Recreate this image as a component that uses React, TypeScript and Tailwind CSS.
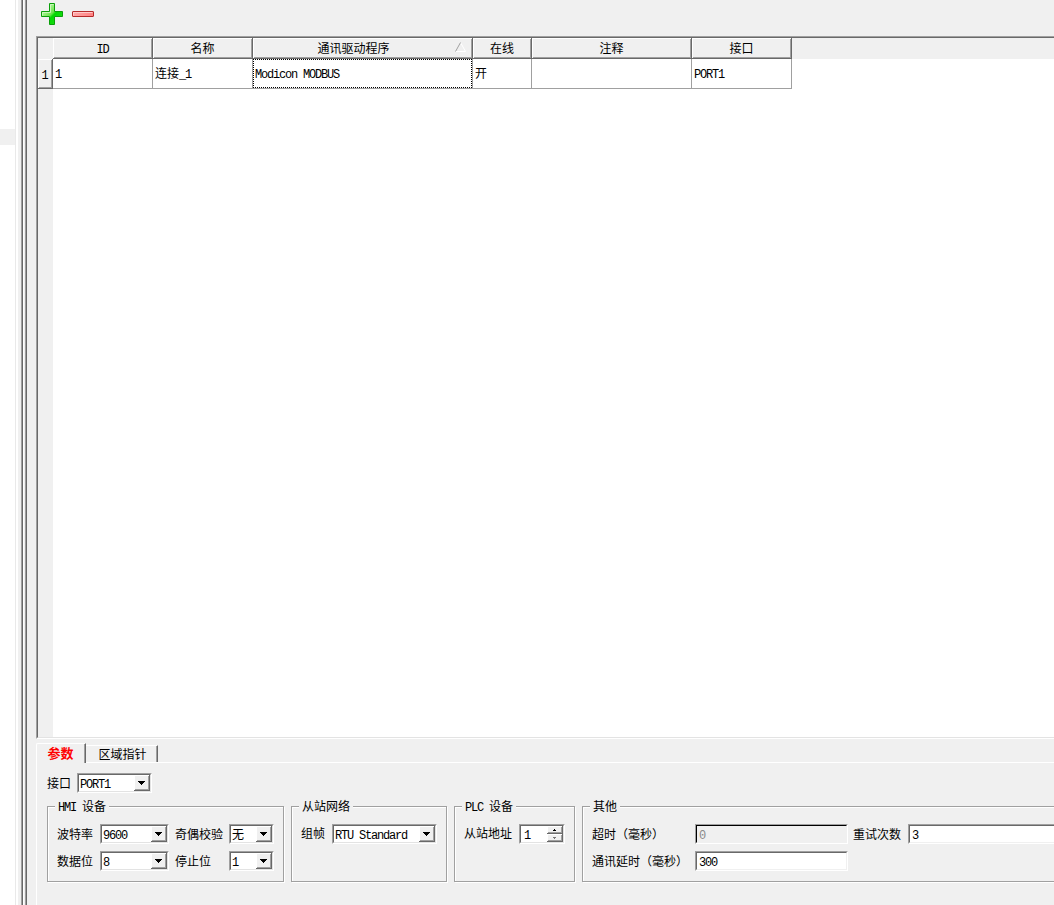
import { Fragment } from "react";
import type { ReactNode } from "react";

const sunken =
  "border border-t-[#a0a0a0] border-l-[#a0a0a0] border-r-white border-b-white";
const sunkenInner =
  "border border-t-[#696969] border-l-[#696969] border-r-[#e3e3e3] border-b-[#e3e3e3]";
const raised =
  "border-r border-b border-[#696969] shadow-[inset_1px_1px_0_#fff,inset_-1px_-1px_0_#a0a0a0]";

// latin runs take half the width of a chinese glyph
const Text = ({ children }: { children: string }) => (
  <span>
    {children.split(/([\x20-\x7e]+)/).map((part, i) =>
      i % 2 ? (
        <span
          key={i}
          className="font-['Liberation_Mono',monospace] text-[12px] leading-3 tracking-[-1.2px] whitespace-pre"
        >
          {part}
        </span>
      ) : (
        <Fragment key={i}>{part}</Fragment>
      )
    )}
  </span>
);

const columns = [
  { title: "ID", value: "1", width: "w-[100px]" },
  { title: "名称", value: "连接_1", width: "w-[100px]" },
  { title: "通讯驱动程序", value: "Modicon MODBUS", width: "w-[220px]" },
  { title: "在线", value: "开", width: "w-[59px]" },
  { title: "注释", value: "", width: "w-[160px]" },
  { title: "接口", value: "PORT1", width: "w-[100px]" },
];

const SortMark = () => (
  <svg className="absolute top-1 right-1.5 h-[11px] w-[11px]" viewBox="0 0 11 11" fill="none">
    <path d="M5.5 0.5 10.5 9.5H0.5" stroke="#fff" />
    <path d="M0.5 9.5 5.5 0.5" stroke="#a0a0a0" />
  </svg>
);

const Toolbar = () => (
  <div className="flex h-9 gap-[9px] pt-[3px] pl-[15px]">
    <svg className="h-[22px] w-[22px]" viewBox="0 0 22 22">
      <defs>
        <linearGradient id="green" x1="0" y1="0" x2="1" y2="1">
          <stop offset="0.2" stopColor="#b5f5a0" />
          <stop offset="0.48" stopColor="#6be64c" />
          <stop offset="0.56" stopColor="#00d800" />
          <stop offset="1" stopColor="#2be020" />
        </linearGradient>
      </defs>
      <path
        d="M8.5 .5h5v8h8v5h-8v8h-5v-8h-8v-5h8z"
        fill="url(#green)"
        stroke="#0a9e0a"
        strokeLinejoin="round"
      />
      <path d="M9.5 9.5v-8h3M1.5 12.5v-3h8" fill="none" stroke="#c9f8ba" />
    </svg>
    <svg className="h-[22px] w-[22px]" viewBox="0 0 22 22">
      <defs>
        <linearGradient id="red" x1="0" y1="0" x2="1" y2="0">
          <stop offset="0" stopColor="#ffa8a8" />
          <stop offset="1" stopColor="#ff8080" />
        </linearGradient>
      </defs>
      <rect x=".5" y="8.5" width="21" height="5" rx=".5" fill="url(#red)" stroke="#b52a2a" />
      <path d="M1.5 12.5v-3h19" fill="none" stroke="#ffcaca" />
    </svg>
  </div>
);

const ConnectionTable = () => (
  <div className={`mr-[-2px] ml-2.5 h-[703px] shrink-0 ${sunken}`}>
    <div className={`flex h-full flex-col bg-white ${sunkenInner}`}>
      <div className="flex h-[21px] shrink-0 bg-[#f0f0f0] pl-[15px]">
        {columns.map((col) => (
          <div
            key={col.title}
            className={`relative flex items-center justify-center ${col.width} ${raised}`}
          >
            {col.title === "通讯驱动程序" ? (
              <>
                <span className="pr-[18px]">
                  <Text>{col.title}</Text>
                </span>
                <SortMark />
              </>
            ) : (
              <Text>{col.title}</Text>
            )}
          </div>
        ))}
      </div>
      <div className="flex min-h-0 flex-1">
        <div className="w-[15px] bg-[#f0f0f0]">
          <div className={`flex h-[30px] items-center justify-center pr-px ${raised}`}>
            <Text>1</Text>
          </div>
        </div>
        {columns.map((col) => (
          <div
            key={col.title}
            className={`flex h-[30px] items-center border-r border-b border-[#a0a0a0] ${col.width}`}
          >
            <div
              className={`flex h-full w-full items-center pb-px ${
                col.title === "通讯驱动程序"
                  ? "border border-dotted border-black pl-px"
                  : "pl-0.5"
              }`}
            >
              <Text>{col.value}</Text>
            </div>
          </div>
        ))}
      </div>
    </div>
  </div>
);

const Select = ({ value, width }: { value: string; width: string }) => (
  <div className={`h-5 shrink-0 ${width} ${sunken}`}>
    <div className={`flex h-full items-center bg-white pl-px ${sunkenInner}`}>
      <span className="flex-1 pb-px whitespace-nowrap">
        <Text>{value}</Text>
      </span>
      <span
        className={`flex h-full w-4 shrink-0 items-center justify-center bg-[#f0f0f0] ${raised}`}
      >
        <svg className="h-1 w-[7px]" viewBox="0 0 7 4" shapeRendering="crispEdges">
          <path d="M0 0h7v1H6v1H5v1H4v1H3V3H2V2H1V1H0z" />
        </svg>
      </span>
    </div>
  </div>
);

const Input = ({
  value,
  width,
  disabled,
}: {
  value: string;
  width: string;
  disabled?: boolean;
}) => (
  <div className={`h-5 shrink-0 ${width} ${sunken}`}>
    <div
      className={`flex h-full items-center border border-r-[#f0f0f0] border-b-[#f0f0f0] pl-0.5 ${
        disabled
          ? "border-t-black border-l-black bg-[#f0f0f0] text-[#8a8a8a]"
          : "border-t-[#696969] border-l-[#696969] bg-white"
      }`}
    >
      <Text>{value}</Text>
    </div>
  </div>
);

const SpinBox = () => (
  <div className={`h-5 w-[46px] shrink-0 ${sunken}`}>
    <div className={`flex h-full items-center bg-white pl-[3px] ${sunkenInner}`}>
      <span className="flex-1">
        <Text>1</Text>
      </span>
      <span className="flex h-full w-4 flex-col bg-[#f0f0f0]">
        <span className={`flex h-2 items-center justify-center ${raised}`}>
          <svg className="h-0.5 w-[3px]" viewBox="0 0 3 2" shapeRendering="crispEdges">
            <path d="M1 0h1v1h1v1H0V1h1z" />
          </svg>
        </span>
        <span className={`flex h-2 items-center justify-center ${raised}`}>
          <svg className="h-0.5 w-[3px]" viewBox="0 0 3 2" shapeRendering="crispEdges">
            <path d="M0 0h3v1H2v1H1V1H0z" fill="#777" />
          </svg>
        </span>
      </span>
    </div>
  </div>
);

const Group = ({
  title,
  width,
  children,
}: {
  title: string;
  width: string;
  children: ReactNode;
}) => (
  <div
    className={`h-[76px] shrink-0 border border-[#a0a0a0] shadow-[1px_1px_0_#fff,inset_1px_1px_0_#fff] ${width}`}
  >
    <div className="-mt-2 ml-[7px] flex h-4 w-fit items-center bg-[#f0f0f0] pr-[3px] pb-0.5 pl-[3px] whitespace-nowrap">
      <Text>{title}</Text>
    </div>
    <div className="flex flex-col gap-[7px] pt-[9px] pl-[9px]">{children}</div>
  </div>
);

const Row = ({ children }: { children: ReactNode }) => (
  <div className="flex h-5 items-center whitespace-nowrap">{children}</div>
);

const Tabs = () => (
  <div className="ml-2.5 flex h-5 shrink-0 items-end">
    <div className="flex h-5 w-[50px] items-center justify-center rounded-tl-[2px] border-t border-l border-white border-r border-r-[#696969] pr-px pb-px text-[13px] font-bold text-[#ff0000] shadow-[inset_-1px_0_0_#a0a0a0]">
      参数
    </div>
    <div className="flex h-full flex-1 border-b border-white pt-0.5">
      <div className="flex h-[17px] w-[72px] items-center justify-center border-t border-r border-t-white border-r-[#696969] pl-0.5 shadow-[inset_-1px_0_0_#a0a0a0]">
        区域指针
      </div>
    </div>
  </div>
);

const Parameters = () => (
  <div className="ml-2.5 flex-1 border-l border-white pt-2.5 pl-2.5">
    <Row>
      <span className="w-[30px]">接口</span>
      <Select value="PORT1" width="w-[75px]" />
    </Row>
    <div className="mt-[13px] flex">
      <Group title="HMI 设备" width="mr-[7px] w-[237px]">
        <Row>
          <span className="w-[43px]">波特率</span>
          <Select value="9600" width="w-[69px]" />
          <span className="ml-1.5 w-[54px]">奇偶校验</span>
          <Select value="无" width="w-[45px]" />
        </Row>
        <Row>
          <span className="w-[43px]">数据位</span>
          <Select value="8" width="w-[69px]" />
          <span className="ml-1.5 w-[54px]">停止位</span>
          <Select value="1" width="w-[45px]" />
        </Row>
      </Group>
      <Group title="从站网络" width="mr-[7px] w-[156px]">
        <Row>
          <span className="w-[31px] pb-[3px]">组帧</span>
          <Select value="RTU Standard" width="w-[105px]" />
        </Row>
      </Group>
      <Group title="PLC 设备" width="mr-[7px] w-[121px]">
        <Row>
          <span className="w-[55px] pb-[3px]">从站地址</span>
          <SpinBox />
        </Row>
      </Group>
      <Group title="其他" width="w-[480px]">
        <Row>
          <span className="w-[103px]">超时（毫秒）</span>
          <Input value="0" width="w-[153px]" disabled />
          <span className="ml-[5px] w-[55px]">重试次数</span>
          <Input value="3" width="w-[152px]" />
        </Row>
        <Row>
          <span className="w-[103px]">通讯延时（毫秒）</span>
          <Input value="300" width="w-[153px]" />
        </Row>
      </Group>
    </div>
  </div>
);

const App = () => {
  return (
    <div className="flex h-[905px] w-[1054px] overflow-hidden bg-[#f0f0f0] font-['Noto_Sans_CJK_SC',sans-serif] text-[12px] leading-4 text-black">
      <div className="w-[18px] shrink-0 bg-white">
        <div className="h-full w-4 border-r border-[#e9e9e9] pt-[129px]">
          <div className="h-4 bg-[#f0f0f0]"></div>
        </div>
      </div>
      <div className="ml-[3px] flex w-1.5 shrink-0 justify-between">
        <div className="w-0.5 border-r border-[#696969] bg-[#a0a0a0]"></div>
        <div className="w-0.5 border-l border-white"></div>
        <div className="w-0.5 border-r border-[#696969] bg-[#a0a0a0]"></div>
      </div>
      <div className="-ml-px flex min-w-0 flex-1 flex-col overflow-hidden">
        <Toolbar />
        <ConnectionTable />
        <div className="h-1 shrink-0"></div>
        <Tabs />
        <Parameters />
      </div>
    </div>
  );
};

export default App;
